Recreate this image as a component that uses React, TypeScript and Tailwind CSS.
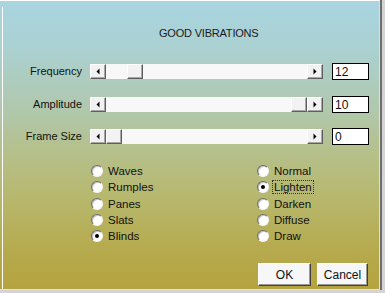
import type { ReactNode } from 'react';

const font = "font-['Liberation_Sans',Arial,sans-serif]";

const Arrow = ({ dir }: { dir: 'left' | 'right' }) => (
  <svg width="4" height="7" viewBox="0 0 4 7" className="block">
    {dir === 'left' ? <polygon points="3.5,0.5 3.5,6.5 0.5,3.5" fill="#000" /> : <polygon points="0.5,0.5 0.5,6.5 3.5,3.5" fill="#000" />}
  </svg>
);

const bevel =
  'border border-t-white border-l-white border-r-[#5e5e5e] border-b-[#5e5e5e] bg-[#f2f2f2] shadow-[inset_-1px_-1px_0_#a8a8a8]';

// thumbLeft: px offset of the thumb inside the track
const ScrollBar = ({ thumbLeft }: { thumbLeft: number }) => (
  <div className="flex h-[15px] w-[233px]">
    <div className={`flex w-[16px] items-center justify-center ${bevel}`}>
      <Arrow dir="left" />
    </div>
    <div className="flex flex-1 bg-[#f8f8f8]">
      <div style={{ width: thumbLeft }} />
      <div className={`w-[16px] ${bevel}`} />
    </div>
    <div className={`flex w-[16px] items-center justify-center ${bevel}`}>
      <Arrow dir="right" />
    </div>
  </div>
);

const SliderRow = ({ label, value, thumbLeft, className }: { label: string; value: string; thumbLeft: number; className?: string }) => (
  <div className={`flex h-[17px] items-center ${className ?? ''}`}>
    <div className="w-[80px] pr-[1px] text-right text-[11px] text-[#111]">{label}</div>
    <div className="ml-[7px]">
      <ScrollBar thumbLeft={thumbLeft} />
    </div>
    <div className="ml-[9px] flex h-[17px] w-[37px] items-center border border-black bg-white pl-[2px] text-[12px] leading-none text-[#111]">
      {value}
    </div>
  </div>
);

const Radio = ({ label, checked, focused }: { label: string; checked?: boolean; focused?: boolean }) => (
  <div className="flex h-[16.3px] items-center">
    <div className="flex h-[12px] w-[12px] items-center justify-center rounded-full border border-t-[#6c6c6c] border-l-[#6c6c6c] border-r-[#f4f4f4] border-b-[#f4f4f4] bg-white shadow-[inset_1px_1px_0_#c4c4c4]">
      {checked && <div className="h-[4px] w-[4px] rounded-full bg-black" />}
    </div>
    <span
      className={`ml-[4px] px-[1px] text-[11.5px] leading-[12px] text-[#111] ${
        focused ? 'outline outline-1 outline-dotted outline-[#333]' : ''
      }`}>
      {label}
    </span>
  </div>
);

const Column = ({ children, className }: { children: ReactNode; className?: string }) => (
  <div className={`flex flex-col ${className ?? ''}`}>{children}</div>
);

const PushButton = ({ children, className }: { children: ReactNode; className?: string }) => (
  <button
    type="button"
    className={`flex h-[23px] items-center justify-center border border-t-white border-l-white border-r-[#404040] border-b-[#404040] bg-[#f7f7f7] text-[12px] text-[#111] shadow-[inset_-1px_-1px_0_#9a9a9a] ${className ?? ''}`}>
    {children}
  </button>
);

export default function App() {
  return (
    <div className={`flex h-[293px] w-[385px] flex-col bg-[#d4d4d4] ${font}`}>
      <div className="flex h-[290px]">
        <div className="flex w-[380px] border-t border-r border-b border-t-white border-r-[#dedede] border-b-[#e2e2e2] bg-[linear-gradient(180deg,#a9d5e1_0%,#abd0cf_18%,#b0c8ac_38%,#b5c08c_52%,#b7b86e_68%,#b6ab50_85%,#b5a33f_100%)]">
          <div className="ml-[2px] mt-[6px] w-px bg-white" />
          <div className="flex flex-1 flex-col">
            <div className="mt-[24px] pl-[156px] text-[11px] leading-[16px] tracking-[-0.2px] text-[#1a1a1a]">GOOD VIBRATIONS</div>

            <div className="mt-[22px]">
              <SliderRow label="Frequency" value="12" thumbLeft={21} />
              <SliderRow label="Amplitude" value="10" thumbLeft={185} className="mt-[16px]" />
              <SliderRow label="Frame Size" value="0" thumbLeft={0} className="mt-[15px]" />
            </div>

            <div className="mt-[18px] flex">
              <Column className="ml-[88px] w-[166px]">
                <Radio label="Waves" />
                <Radio label="Rumples" />
                <Radio label="Panes" />
                <Radio label="Slats" />
                <Radio label="Blinds" checked />
              </Column>
              <Column>
                <Radio label="Normal" />
                <Radio label="Lighten" checked focused />
                <Radio label="Darken" />
                <Radio label="Diffuse" />
                <Radio label="Draw" />
              </Column>
            </div>

            <div className="mt-[19px] flex justify-end pr-[11px]">
              <PushButton className="w-[53px]">OK</PushButton>
              <PushButton className="ml-[6px] w-[51px]">Cancel</PushButton>
            </div>
          </div>
        </div>
        <div className="w-[2px] bg-[#6e6e6e]" />
      </div>
    </div>
  );
}
